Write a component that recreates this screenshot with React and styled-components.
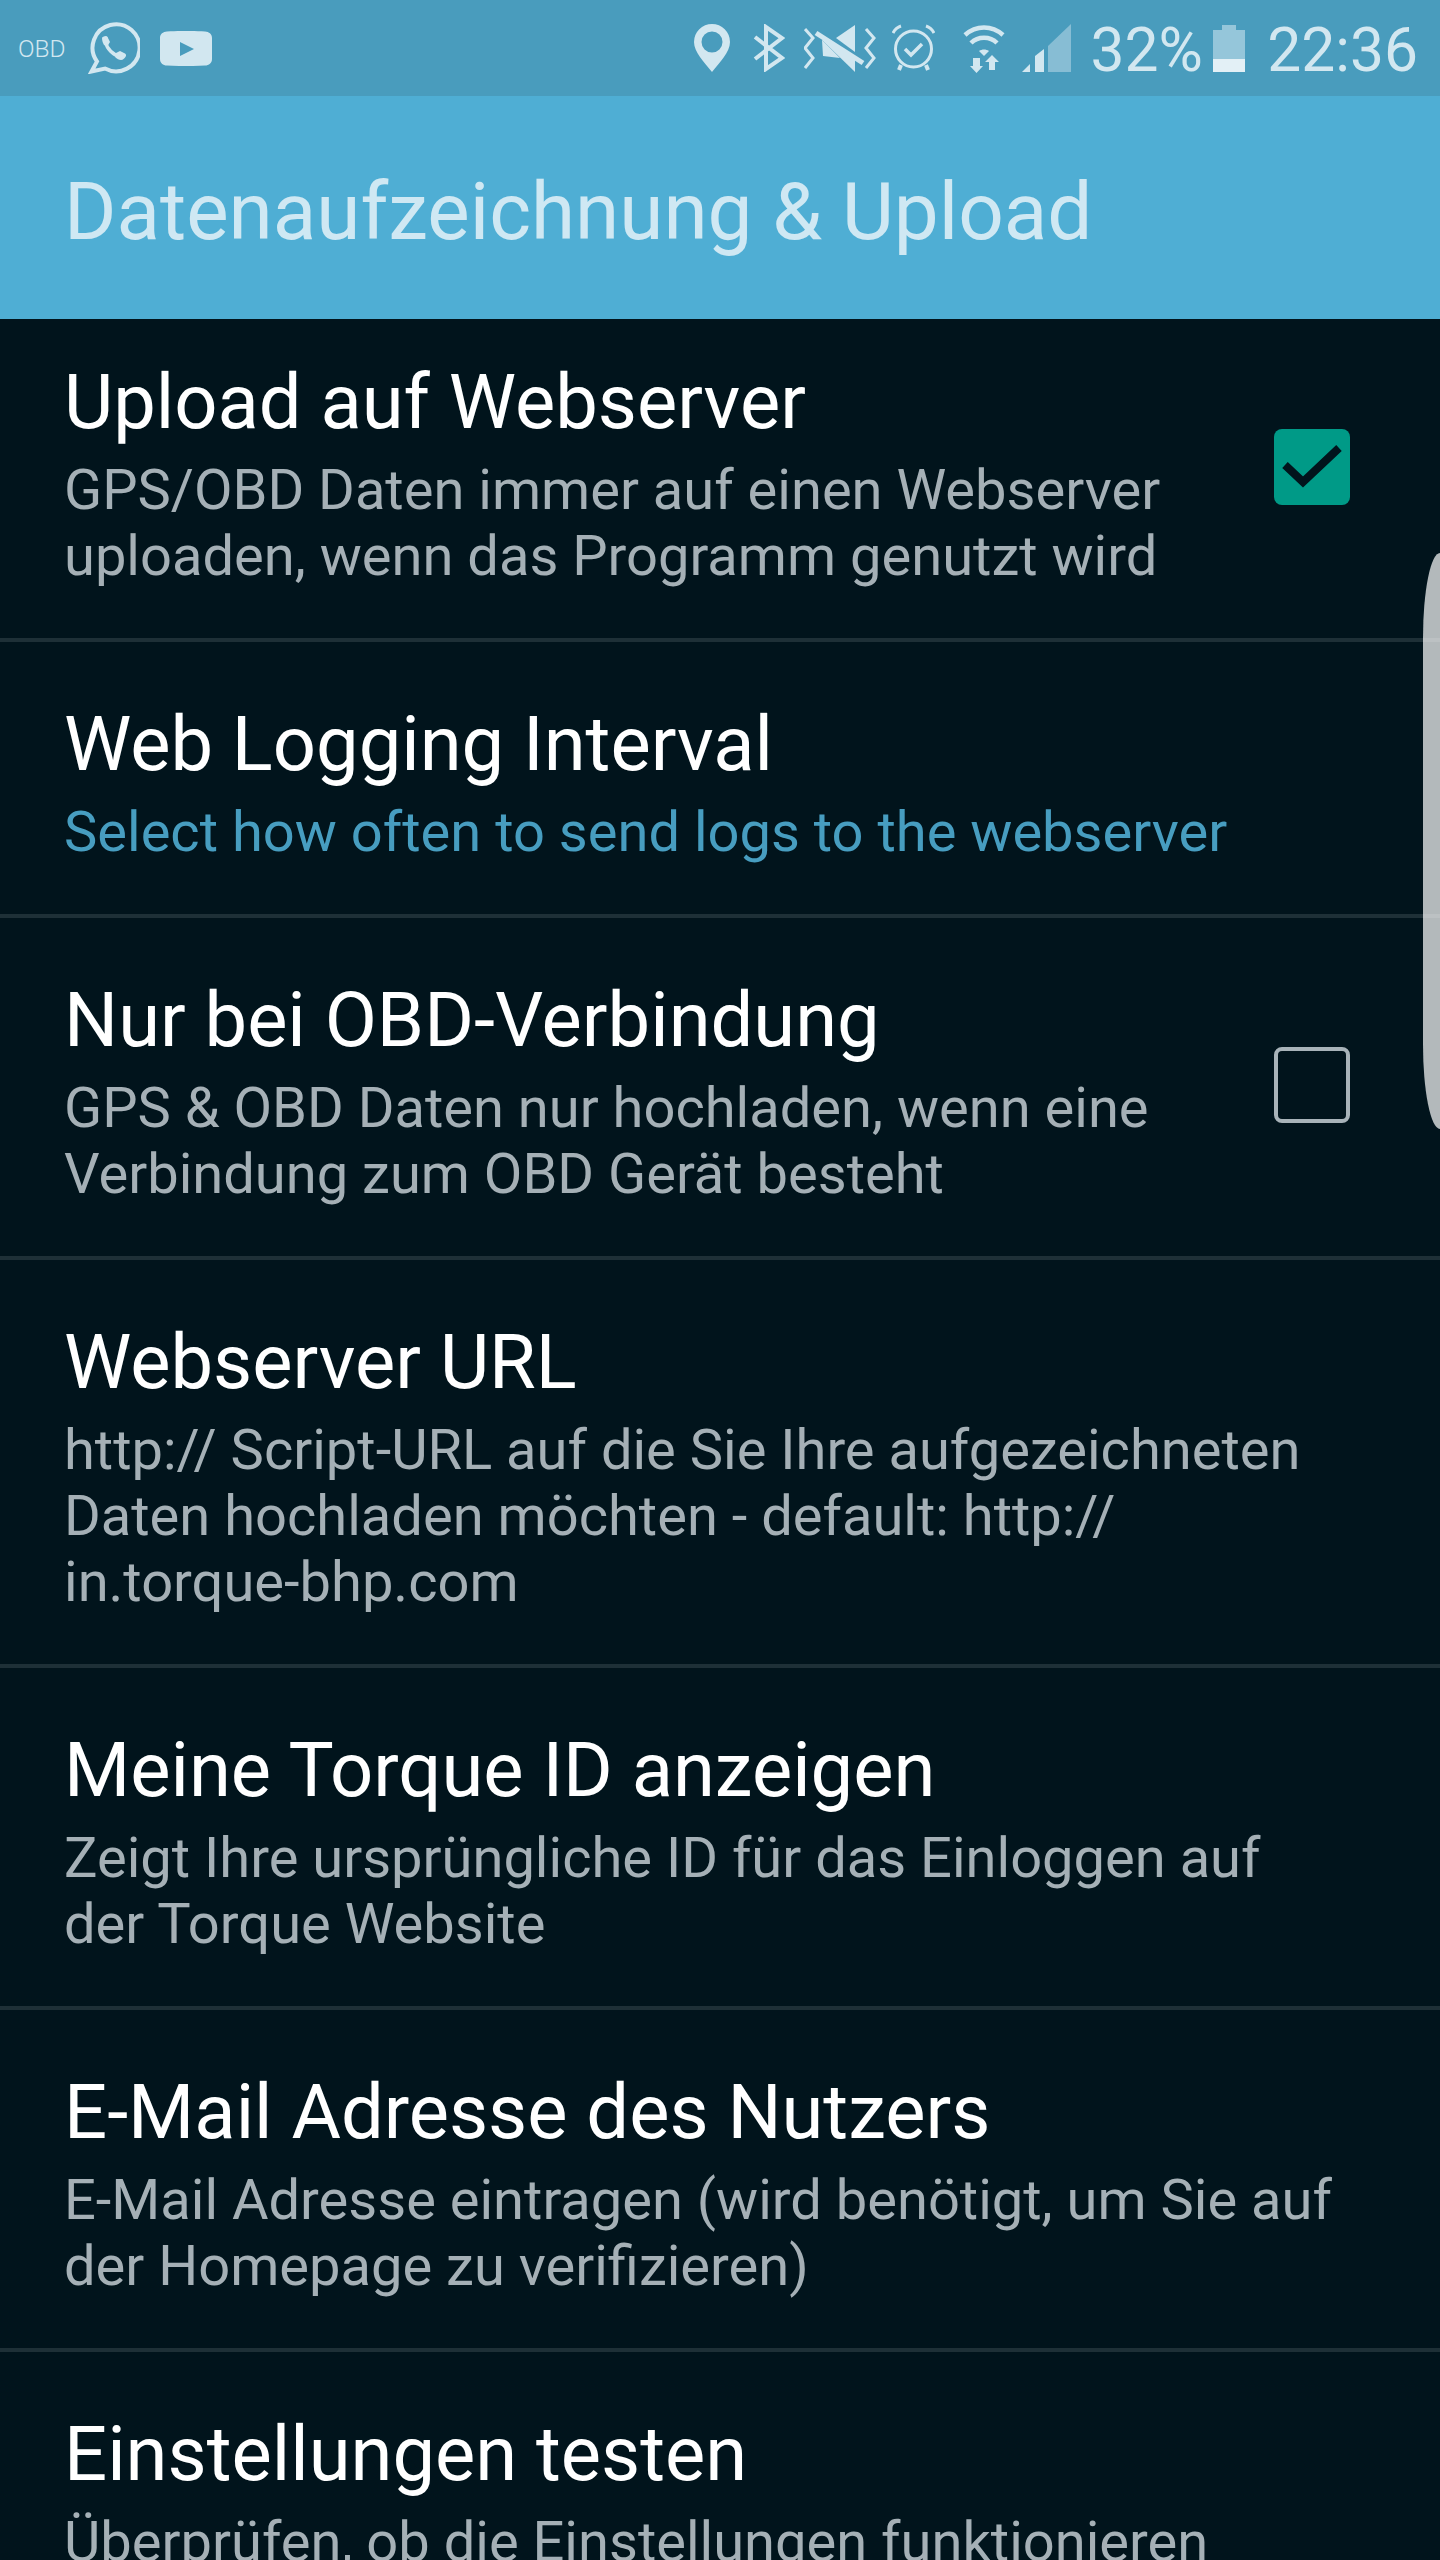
import React from "react";
import styled, { createGlobalStyle } from "styled-components";

const Global = createGlobalStyle`
  html, body { margin: 0; padding: 0; background: #01141c; }
  #root { width: 1440px; height: 2560px; overflow: hidden; position: relative; }
`;

const Screen = styled.div`
  width: 1440px;
  height: 2560px;
  overflow: hidden;
  position: relative;
  background: #01141c;
  font-family: Roboto, "Liberation Sans", sans-serif;
  display: flex;
  flex-direction: column;
`;

const StatusBar = styled.div`
  height: 96px;
  flex: none;
  background: #499cbd;
  color: #d2e7f0;
  display: flex;
  align-items: center;
  padding: 0 22px 0 18px;
  fill: #d2e7f0;
`;

const ObdLabel = styled.span`
  font-size: 24.5px;
  font-weight: 300;
  width: 49px;
  margin-top: 1px;
`;

const Slot = styled.span`
  display: flex;
  flex: none;
  margin-left: ${(p) => p.$ml || 0}px;
  margin-right: ${(p) => (p.$auto ? "auto" : "0")};
`;

const StatusText = styled.span`
  font-size: 60.5px;
  line-height: 60px;
  font-weight: 400;
  margin-left: ${(p) => p.$ml}px;
  margin-top: 5px;
  flex: none;
`;

const AppBar = styled.header`
  height: 223px;
  flex: none;
  background: #4faed4;
  display: flex;
  align-items: center;
  padding-left: 64px;
`;

const AppTitle = styled.h1`
  margin: 9px 0 0;
  font-size: 80px;
  font-weight: 400;
  color: #cfe8f3;
`;

const List = styled.div`
  flex: 1;
  min-height: 0;
  overflow: hidden;
`;

const Inner = styled.div`
  margin-top: -19px;
`;

const Row = styled.div`
  display: flex;
  align-items: center;
  padding: 59px 65px 49px 64px;
  border-bottom: 4px solid #1e3037;
`;

const RowText = styled.div`
  flex: 1;
  min-width: 0;
`;

const RowTitle = styled.div`
  font-size: 75.9px;
  line-height: 88px;
  margin-bottom: 10px;
  color: #ffffff;
`;

const RowSub = styled.div`
  font-size: 56.05px;
  line-height: 66px;
  color: ${(p) => (p.$accent ? "#479dc0" : "#a5b0b6")};
  white-space: pre-line;
`;

const Check = styled.div`
  flex: none;
  width: 76px;
  height: 76px;
  box-sizing: border-box;
  border-radius: 8px;
  margin: 0 25px 14px 40px;
  display: flex;
  align-items: center;
  justify-content: center;
  background: ${(p) => (p.$on ? "#009a87" : "transparent")};
  border: ${(p) => (p.$on ? "0" : "4px solid #a8b3b9")};
`;

const EdgeHandle = styled.div`
  position: absolute;
  right: 0;
  top: 553px;
  width: 17px;
  height: 576px;
  background: rgba(255, 255, 255, 0.7);
  border-radius: 17px 0 0 17px / 85px 0 0 85px;
  z-index: 2;
`;

const Whatsapp = () => (
  <svg width="52" height="52" viewBox="0 0 52 52">
    <path
      fill="none"
      stroke="#d2e7f0"
      strokeWidth="4"
      d="M9 39.5A23.5 23.5 0 1 1 17 46.5L3.5 49.5Z"
    />
    <path
      fill="none"
      stroke="#d2e7f0"
      strokeWidth="3.5"
      d="M17.5 20C19 27 25 33 32 34.5"
    />
    <path d="M14 16C14 15 16 14 18 14C19 14 20 15 20 16L22 20L19.5 24L16 23C15 21 14 19 14 16Z" />
    <path d="M28 31L32 29L37 31.5C38 32 38 33 38 34C37 36 35 38 33 38C31 38 29 37 27 35Z" />
  </svg>
);

const Youtube = () => (
  <svg width="52" height="35" viewBox="0 0 52 35">
    <path
      fillRule="evenodd"
      d="M7 0.5C18 -0.2 34 -0.2 45 0.5C49 0.8 52 3 52 7V28C52 32 49 34.3 45 34.6C34 35.2 18 35.2 7 34.6C3 34.3 0 32 0 28V7C0 3 3 0.8 7 0.5ZM20 11V25L34 18Z"
    />
  </svg>
);

const Pin = () => (
  <svg width="36" height="48" viewBox="0 0 36 48">
    <path
      fillRule="evenodd"
      d="M18 0A18 18 0 0 1 36 18C36 28 26 38 18 48C10 38 0 28 0 18A18 18 0 0 1 18 0ZM18 7.5A10.5 10.5 0 1 0 18 28.5A10.5 10.5 0 1 0 18 7.5Z"
    />
  </svg>
);

const Bluetooth = () => (
  <svg width="32" height="48" viewBox="0 0 32 48" fill="none" stroke="#d2e7f0" strokeWidth="4">
    <path d="M2 13L29 34L13 45V3L29 14L2 35" />
  </svg>
);

const MuteVibrate = () => (
  <svg width="72" height="47" viewBox="0 0 72 47">
    <g fill="none" stroke="#d2e7f0" strokeWidth="3">
      <path d="M1 4L9 13L1 23L9 33L1 43" />
      <path d="M62 4L70 13L62 23L70 33L62 43" />
    </g>
    <path d="M51 0V27L32 13Z" />
    <path d="M18 15L51 47V33L25 14Z" />
    <path d="M18 15L36 33L19 31Z" />
    <path d="M12 8L59 38" stroke="#d2e7f0" strokeWidth="5" fill="none" />
  </svg>
);

const Alarm = () => (
  <svg width="43" height="48" viewBox="0 0 43 48" fill="none" stroke="#d2e7f0" strokeWidth="3">
    <circle cx="21.5" cy="25" r="18" />
    <path d="M1 9C3 5 6 3 9 2" />
    <path d="M42 9C40 5 37 3 34 2" />
    <path d="M9 41L7 46" strokeWidth="4" />
    <path d="M34 41L36 46" strokeWidth="4" />
    <path d="M13 25L19 31L30 20" strokeWidth="3.5" />
  </svg>
);

const Wifi = () => (
  <svg width="42" height="49" viewBox="0 0 42 49">
    <g fill="none" stroke="#d2e7f0" strokeWidth="4.5">
      <path d="M2 11C13 1 29 1 40 11" />
      <path d="M8 19C15 12 27 12 34 19" />
    </g>
    <path d="M16 27C19 25 23 25 26 27L21 32Z" />
    <path d="M10 34H17V42H20L13.5 49L7 42H10Z" />
    <path d="M26 46V38H22L29 31L36 38H32V46Z" />
  </svg>
);

const Signal = () => (
  <svg width="49" height="49" viewBox="0 0 49 49">
    <path d="M0 48L8 40V48Z" />
    <path d="M13 32L22 25V48H13Z" />
    <path d="M26 22L49 0V48H26Z" opacity="0.45" />
  </svg>
);

const Battery = () => (
  <svg width="32" height="47" viewBox="0 0 32 47">
    <path d="M9 0H23V5H32V34H0V5H9Z" fill="#95c6da" />
    <rect y="34" width="32" height="13" fill="#e3f0f6" />
  </svg>
);

const CheckMark = () => (
  <svg width="60" height="46" viewBox="0 0 60 46" fill="none" stroke="#01141c" strokeWidth="8">
    <path d="M3 21L21 38L57 4" />
  </svg>
);

const rows = [
  { t: "Upload auf Webserver", s: "GPS/OBD Daten immer auf einen Webserver\nuploaden, wenn das Programm genutzt wird", c: "on" },
  { t: "Web Logging Interval", s: "Select how often to send logs to the webserver", accent: true },
  { t: "Nur bei OBD-Verbindung", s: "GPS & OBD Daten nur hochladen, wenn eine\nVerbindung zum OBD Gerät besteht", c: "off" },
  { t: "Webserver URL", s: "http:// Script-URL auf die Sie Ihre aufgezeichneten\nDaten hochladen möchten - default: http://\nin.torque-bhp.com" },
  { t: "Meine Torque ID anzeigen", s: "Zeigt Ihre ursprüngliche ID für das Einloggen auf\nder Torque Website" },
  { t: "E-Mail Adresse des Nutzers", s: "E-Mail Adresse eintragen (wird benötigt, um Sie auf\nder Homepage zu verifizieren)" },
  { t: "Einstellungen testen", s: "Überprüfen, ob die Einstellungen funktionieren" },
];

export default function App() {
  return (
    <Screen>
      <Global />
      <StatusBar>
        <ObdLabel>OBD</ObdLabel>
        <Slot $ml={21}><Whatsapp /></Slot>
        <Slot $ml={20} $auto><Youtube /></Slot>
        <Slot><Pin /></Slot>
        <Slot $ml={23}><Bluetooth /></Slot>
        <Slot $ml={19}><MuteVibrate /></Slot>
        <Slot $ml={16}><Alarm /></Slot>
        <Slot $ml={28}><Wifi /></Slot>
        <Slot $ml={17}><Signal /></Slot>
        <StatusText $ml={20}>32%</StatusText>
        <Slot $ml={10.5}><Battery /></Slot>
        <StatusText $ml={22}>22:36</StatusText>
      </StatusBar>
      <AppBar>
        <AppTitle>Datenaufzeichnung &amp; Upload</AppTitle>
      </AppBar>
      <List>
        <Inner>
          {rows.map((r) => (
            <Row key={r.t}>
              <RowText>
                <RowTitle>{r.t}</RowTitle>
                <RowSub $accent={r.accent}>{r.s}</RowSub>
              </RowText>
              {r.c && (
                <Check $on={r.c === "on"}>{r.c === "on" && <CheckMark />}</Check>
              )}
            </Row>
          ))}
        </Inner>
      </List>
      <EdgeHandle />
    </Screen>
  );
}
